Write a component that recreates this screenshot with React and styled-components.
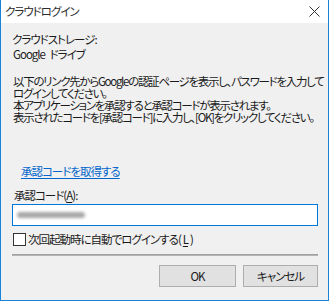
import * as React from "react";
import styled, { createGlobalStyle } from "styled-components";

const GlobalStyle = createGlobalStyle`
  html, body {
    margin: 0;
    padding: 0;
    background: #ffffff;
  }
  body {
    font-family: "Noto Sans CJK JP", "Noto Sans", sans-serif;
    font-size: 11.5px;
    letter-spacing: -1px;
    word-spacing: 3px;
    color: #1a1a1a;
    font-feature-settings: "palt";
  }
`;

const Window = styled.div`
  width: 329px;
  height: 301px;
  box-sizing: border-box;
  border: 1px solid #1883d7;
  border-top: none;
  background: #f0f0f0;
  display: flex;
  flex-direction: column;
`;

const TitleBar = styled.div`
  height: 23px;
  background: #ffffff;
  display: flex;
  align-items: center;
  justify-content: space-between;
  padding: 0 8px 0 4px;
`;

const Title = styled.span`
  line-height: 15px;
  color: #2b2b2b;
`;

const CloseIcon = () => (
  <svg width="11" height="11" viewBox="0 0 11 11">
    <path d="M0.5 0.5 L10.5 10.5 M10.5 0.5 L0.5 10.5" stroke="#333" strokeWidth="1" fill="none" />
  </svg>
);

const Body = styled.div`
  flex: 1;
  padding: 9px 10px 0 11px;
  display: flex;
  flex-direction: column;
`;

const Line = styled.div`
  line-height: 15px;
  padding-left: ${(p) => p.indent || 0}px;
  margin-top: ${(p) => p.mt || 0}px;
  white-space: nowrap;
`;

const Paragraph = styled.div`
  margin-top: 13px;
  padding-left: 1px;
  line-height: 12px;
  letter-spacing: -1.3px;
  white-space: nowrap;
`;

const Link = styled.a`
  color: #0066cc;
  text-decoration: underline;
  text-underline-offset: 2px;
  cursor: pointer;
`;

const Key = styled.span`
  text-decoration: underline;
  text-underline-offset: 2px;
`;

const Input = styled.div`
  margin-top: 1px;
  height: 22px;
  box-sizing: border-box;
  border: 1px solid #0078d7;
  background: #ffffff;
  display: flex;
  align-items: center;
  padding-left: 4px;
`;

const Blurred = styled.div`
  width: 68px;
  height: 6px;
  border-radius: 3px;
  background: #a8a8a8;
  filter: blur(1.5px);
`;

const CheckRow = styled.label`
  margin-top: 6px;
  display: flex;
  align-items: center;
  gap: 2px;
  line-height: 15px;
  white-space: nowrap;
`;

const Box = styled.span`
  width: 13px;
  height: 13px;
  box-sizing: border-box;
  border: 1px solid #333333;
  background: #ffffff;
  margin-left: 1px;
`;

const Separator = styled.div`
  margin-top: 7px;
  height: 2px;
  background: #b4b4b4;
  border-top: 1px solid #a0a0a0;
  box-sizing: border-box;
`;

const ButtonRow = styled.div`
  margin-top: 9px;
  display: flex;
  justify-content: flex-end;
  gap: 7px;
`;

const Button = styled.button`
  width: ${(p) => p.w}px;
  height: 22px;
  box-sizing: border-box;
  border: 1px solid #adadad;
  background: #e1e1e1;
  font-family: inherit;
  font-size: inherit;
  letter-spacing: inherit;
  color: #1a1a1a;
  padding: 0;
  font-feature-settings: "palt";
`;

const App = () => (
  <>
    <GlobalStyle />
    <Window>
      <TitleBar>
        <Title>クラウドログイン</Title>
        <CloseIcon />
      </TitleBar>
      <Body>
        <Line>クラウドストレージ:</Line>
        <Line indent={1}>Google ドライブ</Line>
        <Paragraph>
          以下のリンク先からGoogleの認証ページを表示し、パスワードを入力して
          <br />
          ログインしてください。
          <br />
          本アプリケーションを承認すると承認コードが表示されます。
          <br />
          表示されたコードを[承認コード]に入力し、[OK]をクリックしてください。
        </Paragraph>
        <Line indent={9} mt={41}>
          <Link>承認コードを取得する</Link>
        </Line>
        <Line indent={2} mt={9}>
          承認コード(<Key>A</Key>):
        </Line>
        <Input>
          <Blurred />
        </Input>
        <CheckRow>
          <Box />
          次回起動時に自動でログインする(<Key>L</Key>)
        </CheckRow>
        <Separator />
        <ButtonRow>
          <Button w={77}>OK</Button>
          <Button w={75}>キャンセル</Button>
        </ButtonRow>
      </Body>
    </Window>
  </>
);

export default App;
